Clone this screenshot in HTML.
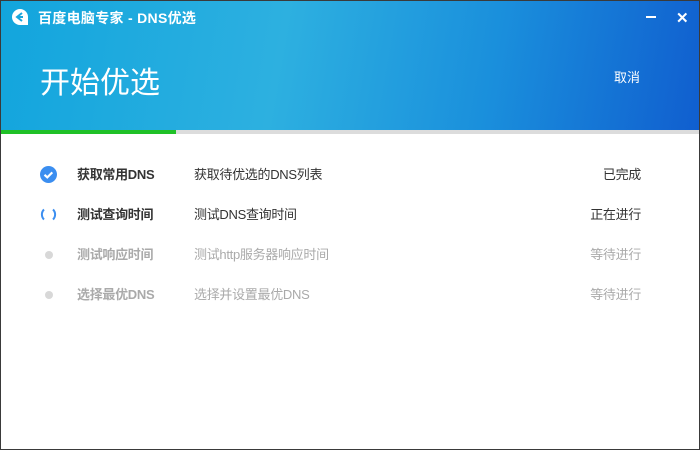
<!DOCTYPE html>
<html><head><meta charset="utf-8"><style>
*{margin:0;padding:0;box-sizing:border-box}
body{width:700px;height:450px;overflow:hidden;background:#fff;font-family:"Liberation Sans","Noto Sans CJK SC",sans-serif;position:relative}
.frame{position:absolute;left:0;top:0;width:700px;height:450px;border:1px solid #3a3a3a;pointer-events:none;z-index:5}
.hdr{position:absolute;left:0;top:0;width:700px;height:130px;background:linear-gradient(100deg,#12a5dd 0%,#2db0e0 40%,#1a8fdc 70%,#105ecf 100%)}
.title{position:absolute;left:38px;top:8px;color:#fff;font-size:14px;font-weight:bold;letter-spacing:0.3px}
.logo{position:absolute;left:11px;top:8px}
.big{position:absolute;left:40px;top:58px;color:#fff;font-size:30px}
.cancel{position:absolute;left:614px;top:67px;color:#fff;font-size:13px}
.min{position:absolute;left:646px;top:16px;width:10px;height:2px;background:#fff}
.x{position:absolute;left:676px;top:9px;color:#fff;font-size:15px;font-weight:bold}
.pb{position:absolute;left:0;top:130px;width:700px;height:4px;background:#dcdcdc}
.pb i{position:absolute;left:0;top:0;width:176px;height:4px;background:#1fc127}
.row{position:absolute;left:0;width:700px;height:20px;font-size:13px;line-height:20px;letter-spacing:-0.3px}
.row .a{position:absolute;left:77px;font-weight:bold;color:#333}
.row .b{position:absolute;left:194px;color:#333}
.row .c{position:absolute;right:59px;color:#333}
.g .a,.g .b,.g .c{color:#aaa}
.dot{position:absolute;left:45px;top:6px;width:8px;height:8px;border-radius:50%;background:#d8d8d8}
</style></head><body>
<div class="hdr">
<svg class="logo" width="18" height="18" viewBox="0 0 18 18"><path d="M9 1a8 8 0 1 0 0 16h8V9A8 8 0 0 0 9 1z" fill="#fff"/><path d="M11 5L6 9l5 4M6 9h6" stroke="#1aa6dd" stroke-width="2" fill="none"/></svg>
<div class="title">百度电脑专家 - DNS优选</div>
<div class="min"></div><div class="x">✕</div>
<div class="big">开始优选</div>
<div class="cancel">取消</div>
</div>
<div class="pb"><i></i></div>
<div class="row" style="top:165px">
<svg style="position:absolute;left:40px;top:1px" width="17" height="17" viewBox="0 0 17 17"><circle cx="8.5" cy="8.5" r="8.5" fill="#3b8ef0"/><path d="M4.5 8.8l2.8 2.6 5-5" stroke="#fff" stroke-width="2.2" fill="none"/></svg>
<span class="a">获取常用DNS</span><span class="b">获取待优选的DNS列表</span><span class="c">已完成</span></div>
<div class="row" style="top:205px">
<svg style="position:absolute;left:40px;top:1px" width="17" height="17" viewBox="0 0 17 17"><path d="M4 3.5A7 7 0 0 0 4 13.5" stroke="#3b8ef0" stroke-width="2" fill="none"/><path d="M13 3.5A7 7 0 0 1 13 13.5" stroke="#3b8ef0" stroke-width="2" fill="none"/></svg>
<span class="a">测试查询时间</span><span class="b">测试DNS查询时间</span><span class="c">正在进行</span></div>
<div class="row g" style="top:245px"><div class="dot"></div><span class="a">测试响应时间</span><span class="b">测试http服务器响应时间</span><span class="c">等待进行</span></div>
<div class="row g" style="top:285px"><div class="dot"></div><span class="a">选择最优DNS</span><span class="b">选择并设置最优DNS</span><span class="c">等待进行</span></div>
<div class="frame"></div>
</body></html>
